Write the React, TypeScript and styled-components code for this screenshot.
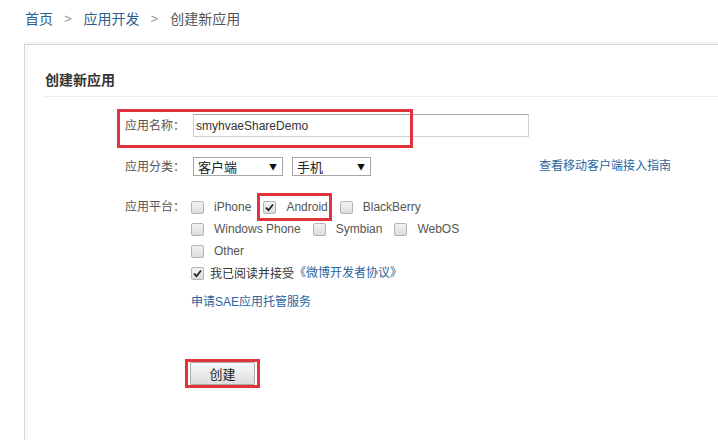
import React from "react";
import styled, { createGlobalStyle } from "styled-components";

const Global = createGlobalStyle`
  html, body { margin: 0; padding: 0; background: #fff; }
  body {
    font-family: "Liberation Sans", Arial, "Noto Sans CJK SC", sans-serif;
    font-size: 12px;
    color: #555;
    overflow: hidden;
  }
`;

const Page = styled.div`
  width: 718px;
  height: 440px;
  overflow: hidden;
`;

const Breadcrumb = styled.nav`
  height: 44px;
  box-sizing: border-box;
  padding: 9px 0 0 25px;
  display: flex;
  align-items: flex-start;
  font-size: 14px;
  line-height: 20px;
`;

const Crumb = styled.span<{ $current?: boolean }>`
  color: ${(p) => (p.$current ? "#555" : "#2b5d90")};
`;

const Sep = styled.span`
  color: #999;
  font-size: 13px;
  margin: 0 12px 0 11px;
`;

const Panel = styled.section`
  margin-left: 24px;
  width: 760px;
  height: 420px;
  border-top: 1px solid #d6d6d6;
  border-left: 1px solid #d6d6d6;
  box-shadow: inset 4px 0 0 #fafafa, 0 -2px 0 #f4f4f4;
  background: #fff;
  box-sizing: border-box;
`;

const PanelTitle = styled.h2`
  margin: 0 0 0 19px;
  padding: 26px 0 7px 1px;
  font-size: 14px;
  line-height: 18px;
  font-weight: bold;
  color: #333;
  border-bottom: 1px solid #ececec;
`;

const Form = styled.div`
  padding-left: 100px;
  display: flex;
  flex-direction: column;
`;

const Row = styled.div<{ $top: number; $h: number }>`
  position: relative;
  display: flex;
  align-items: ${(p) => (p.$h ? "center" : "flex-start")};
  margin-top: ${(p) => p.$top}px;
  min-height: ${(p) => p.$h}px;
`;

const Label = styled.span<{ $lh?: number }>`
  width: 66px;
  flex: none;
  color: #555;
  line-height: ${(p) => p.$lh || 16}px;
`;

const NameInput = styled.div`
  margin-left: 2px;
  width: 336px;
  height: 23px;
  box-sizing: border-box;
  border: 1px solid #cfcfcf;
  border-top-color: #a9a9a9;
  display: flex;
  align-items: center;
  padding-left: 2px;
  font-size: 12px;
  color: #333;
`;

const Annotation = styled.div`
  position: absolute;
  border: 3px solid #e0343a;
  pointer-events: none;
`;

const Select = styled.div<{ $w: number }>`
  margin-left: 2px;
  margin-right: 7px;
  width: ${(p) => p.$w}px;
  height: 19px;
  box-sizing: border-box;
  border: 1px solid #a6a6a6;
  display: flex;
  align-items: center;
  justify-content: space-between;
  padding: 0 5px 0 4px;
  font-size: 13px;
  color: #222;
  font-family: "Noto Sans CJK SC", sans-serif;
`;

const Arrow = styled.span`
  font-size: 8px;
  color: #111;
`;

const Link = styled.a`
  color: #2b64a0;
  text-decoration: none;
  font-size: 12px;
  line-height: 16px;
  cursor: pointer;
`;

const GuideLink = styled(Link)`
  margin-left: 161px;
  margin-top: -2px;
`;

const Lines = styled.div`
  display: flex;
  flex-direction: column;
`;

const Line = styled.div<{ $top?: number }>`
  display: flex;
  align-items: center;
  height: 22px;
  margin-top: ${(p) => p.$top ?? 0}px;
`;

const Option = styled.label<{ $gap?: number }>`
  display: inline-flex;
  align-items: center;
  margin-right: ${(p) => p.$gap ?? 12}px;
  color: #555;
  font-size: 12px;
  line-height: 14px;
`;

const Marked = styled.span`
  display: inline-flex;
  align-items: center;
  border: 3px solid #e0343a;
  padding: 4px 1px 4px 3px;
  margin: 0 8px 0 0;
`;

const Box = styled.span`
  width: 13px;
  height: 13px;
  box-sizing: border-box;
  border: 1px solid #b3b3b3;
  border-radius: 2px;
  background: linear-gradient(#f2f2f2, #dcdcdc);
  margin-right: 10px;
  display: inline-flex;
  align-items: center;
  justify-content: center;
  flex: none;
`;

const Agree = styled.span`
  color: #333;
  font-size: 12px;
  line-height: 16px;
  font-family: "Noto Sans CJK SC", sans-serif;
`;

const AgreeBox = styled(Box)`
  margin-right: 6px;
`;

const ButtonMark = styled.div<{ $top: number }>`
  align-self: flex-start;
  margin-left: 60px;
  margin-top: ${(p) => p.$top}px;
  border: 3px solid #e0343a;
  padding: 0 2px;
`;

const Button = styled.button`
  width: 65px;
  height: 23px;
  border: 1px solid #adadad;
  border-radius: 1px;
  background: linear-gradient(#fafafa, #dcdcdc);
  font-family: "Noto Sans CJK SC", sans-serif;
  font-size: 13px;
  color: #222;
  padding: 0;
  display: block;
`;

const Check = () => (
  <svg width="9" height="9" viewBox="0 0 9 9">
    <path d="M1 4.6 L3.5 7.2 L8 1.5" fill="none" stroke="#222" strokeWidth="1.8" />
  </svg>
);

export default function App() {
  return (
    <Page>
      <Global />
      <Breadcrumb>
        <Crumb>首页</Crumb>
        <Sep>&gt;</Sep>
        <Crumb>应用开发</Crumb>
        <Sep>&gt;</Sep>
        <Crumb $current>创建新应用</Crumb>
      </Breadcrumb>
      <Panel>
        <PanelTitle>创建新应用</PanelTitle>
        <Form>
          <Row $top={17} $h={23}>
            <Label>应用名称：</Label>
            <NameInput>smyhvaeShareDemo</NameInput>
            <Annotation style={{ left: -8, top: -5, width: 290, height: 33 }} />
          </Row>
          <Row $top={20} $h={19}>
            <Label>应用分类：</Label>
            <Select $w={90}>
              客户端<Arrow>▼</Arrow>
            </Select>
            <Select $w={79}>
              手机<Arrow>▼</Arrow>
            </Select>
            <GuideLink>查看移动客户端接入指南</GuideLink>
          </Row>
          <Row $top={20} $h={0}>
            <Label $lh={22}>应用平台：</Label>
            <Lines>
              <Line>
                <Option $gap={6}>
                  <Box />
                  iPhone
                </Option>
                <Marked>
                  <Option $gap={0}>
                    <Box>
                      <Check />
                    </Box>
                    Android
                  </Option>
                </Marked>
                <Option>
                  <Box />
                  BlackBerry
                </Option>
              </Line>
              <Line>
                <Option>
                  <Box />
                  Windows Phone
                </Option>
                <Option>
                  <Box />
                  Symbian
                </Option>
                <Option>
                  <Box />
                  WebOS
                </Option>
              </Line>
              <Line>
                <Option>
                  <Box />
                  Other
                </Option>
              </Line>
              <Line>
                <AgreeBox>
                  <Check />
                </AgreeBox>
                <Agree>我已阅读并接受</Agree>
                <Link>《微博开发者协议》</Link>
              </Line>
              <Line $top={7}>
                <Link>申请SAE应用托管服务</Link>
              </Line>
            </Lines>
          </Row>
          <ButtonMark $top={46}>
            <Button>创建</Button>
          </ButtonMark>
        </Form>
      </Panel>
    </Page>
  );
}
